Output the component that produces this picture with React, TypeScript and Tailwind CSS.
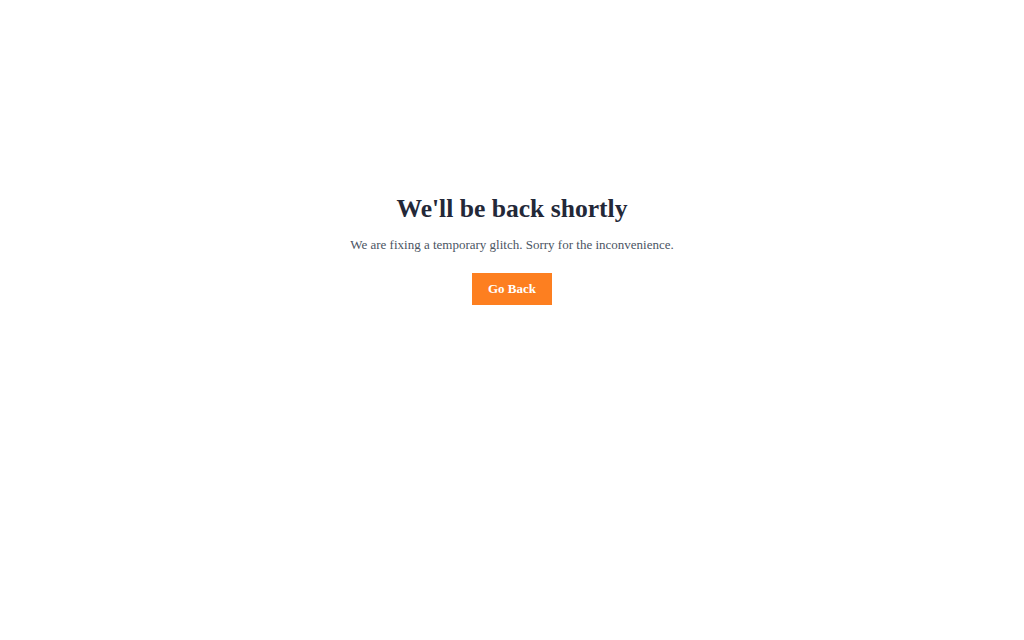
export default function App() {
  return (
    <div className="w-[1024px] h-[640px] bg-white flex flex-col items-center pt-[192px]" style={{ fontFamily: '"Liberation Serif", "Times New Roman", serif' }}>
      <h1 className="text-[25.6px] leading-[34px] font-bold text-[#232838]">We'll be back shortly</h1>
      <p className="mt-[9px] text-[13px] leading-[20px] text-[#4b5563]">We are fixing a temporary glitch. Sorry for the inconvenience.</p>
      <button className="mt-[18px] w-[80px] h-[32px] bg-[#fd7f20] text-white text-[13px] font-bold">Go Back</button>
    </div>
  );
}
